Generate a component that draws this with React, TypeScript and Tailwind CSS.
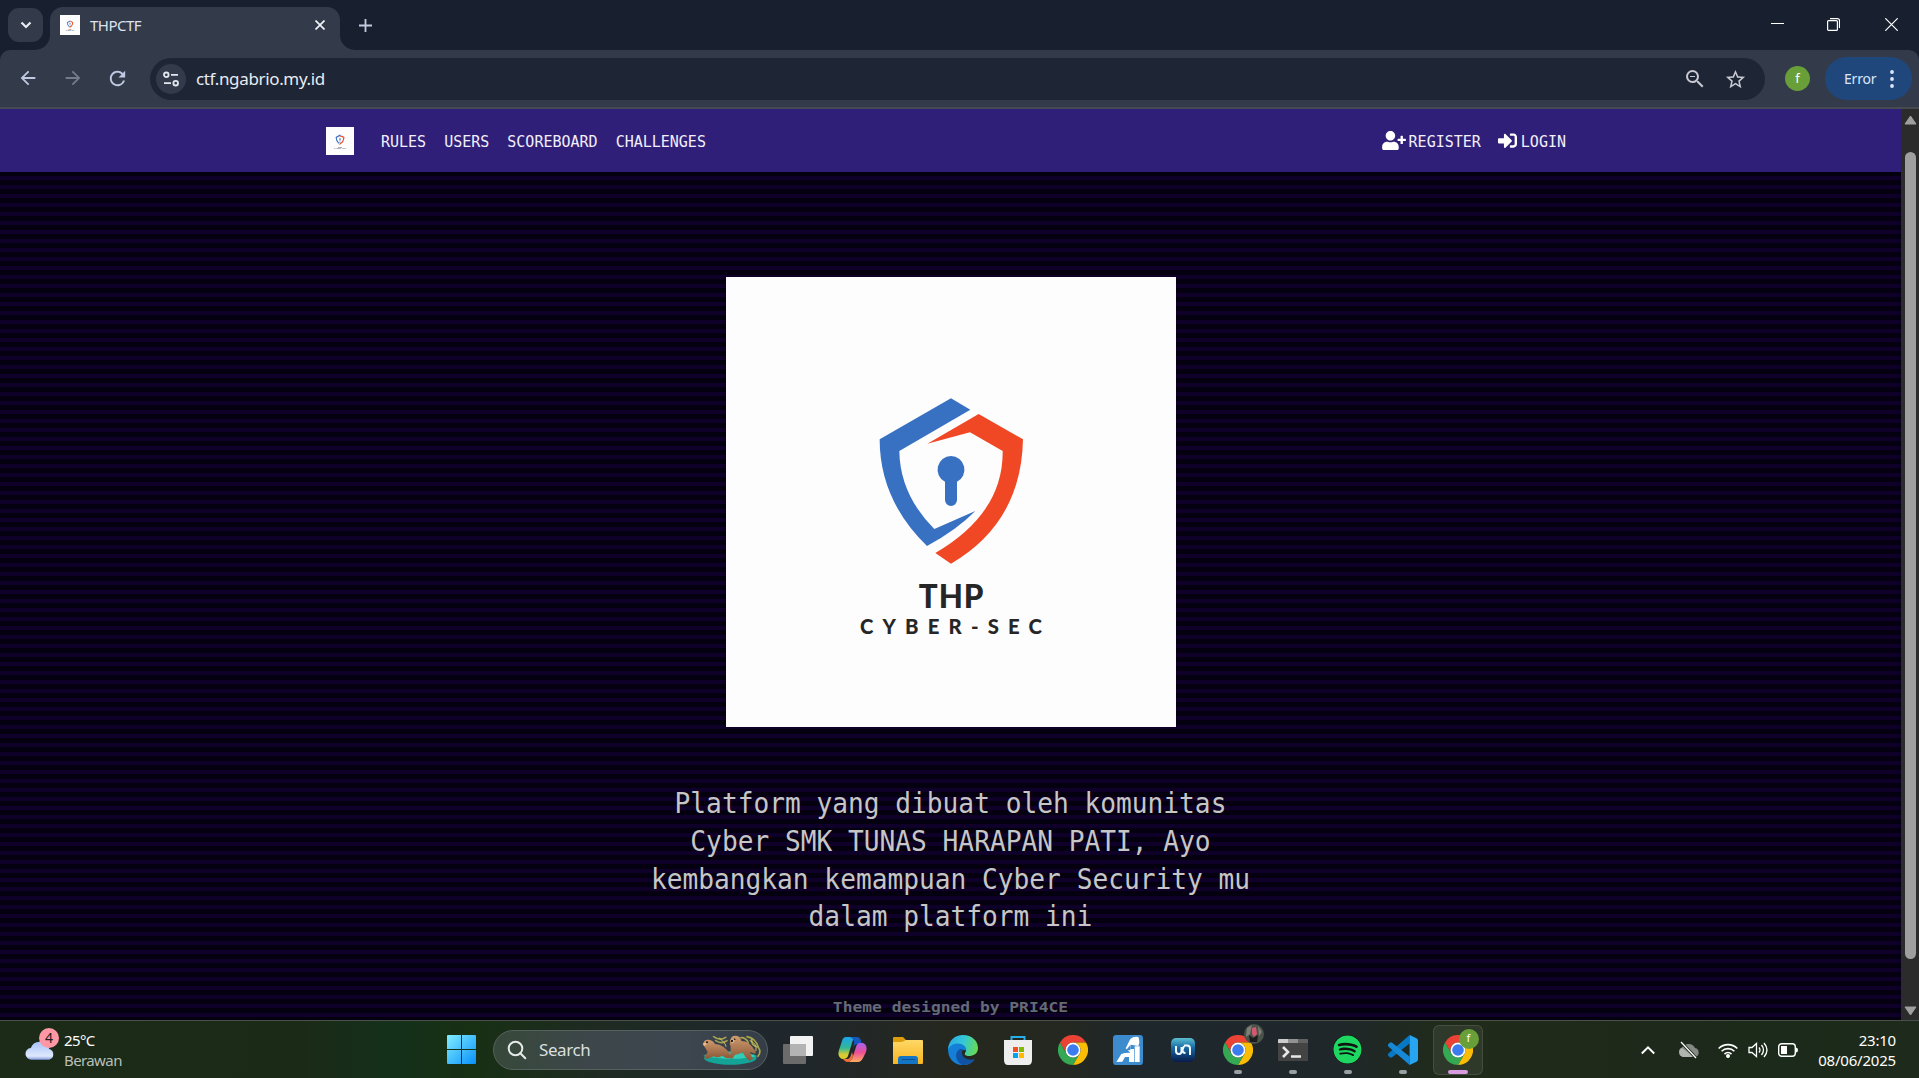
import React from "react";
import { FaUserPlus, FaSignInAlt, FaSpotify } from "react-icons/fa";
import { MdArrowBack, MdArrowForward, MdRefresh, MdZoomOut, MdStarBorder } from "react-icons/md";

const UI = "font-['Noto_Sans','Open_Sans',sans-serif]";
const MONO = "font-['DejaVu_Sans_Mono','Liberation_Mono',monospace]";

function Logo({ className }: { className: string }) {
  return (
    <svg viewBox="0 0 450 450" className={className}>
      <rect width="450" height="450" fill="#fdfdfd" />
      <g transform="translate(114 103) scale(.33333)">
        <path fill="#3871c2" d="M333 55 391 89 178 213Q180 344 283 447L406 393Q350 450 261 498Q119 360 119 178Z" />
        <path fill="#f04825" d="M416 102 549 178Q544 428 333 551L286 519Q490 400 488 213L390 157 262 191Z" />
        <path fill="#3871c2" d="M333 228a41 41 0 0 1 18 77.500V360a18 18 0 0 1-36 0V305.500A41 41 0 0 1 333 228Z" />
        <g fill="#262626" fontFamily="Lato, sans-serif" fontWeight="900">
          <text x="236 296 371" y="683" fontSize="94">THP</text>
          <text x="60" y="762" fontSize="61" textLength="546">CYBER-SEC</text>
        </g>
      </g>
    </svg>
  );
}

function ChromeIcon() {
  return (
    <svg viewBox="0 0 48 48" className="size-[30px]">
      <path fill="#ea4335" d="M3.200 12A24 24 0 0 1 44.800 12H24A12 12 0 0 0 13.600 30Z" />
      <path fill="#fbbc04" d="M44.800 12A24 24 0 0 1 24 48L34.400 30A12 12 0 0 0 24 12Z" />
      <path fill="#34a853" d="M24 48A24 24 0 0 1 3.200 12L13.600 30A12 12 0 0 0 34.400 30Z" />
      <circle cx="24" cy="24" r="12" fill="#fff" />
      <circle cx="24" cy="24" r="9.300" fill="#3b7cf0" />
    </svg>
  );
}

function TabStrip() {
  return (
    <div className="flex h-[50px] items-start bg-[#182030] text-[#dde3ee]">
      <div className="ml-2 mt-2 flex h-[34px] w-[35px] items-center justify-center rounded-[11px] bg-[#333b4b]">
        <svg viewBox="0 0 12 8" className="h-2 w-3" fill="none" stroke="#e8ebf2" strokeWidth="2.200"><path d="M1.500 1.500 6 6l4.500-4.500" /></svg>
      </div>
      <div className="relative ml-[7px] mt-[7px] flex h-[43px] w-[290px] items-start rounded-t-[13px] bg-[#333b4b]">
        <svg viewBox="0 0 15 15" className="absolute -left-[15px] bottom-0 size-[15px]"><path fill="#333b4b" d="M0 15A15 15 0 0 0 15 0V15Z" /></svg>
        <svg viewBox="0 0 15 15" className="absolute -right-[15px] bottom-0 size-[15px]"><path fill="#333b4b" d="M15 15A15 15 0 0 1 0 0V15Z" /></svg>
        <Logo className="ml-[10px] mt-2 size-5" />
        <span className={`${UI} ml-[10px] mt-[8px] text-[15px] leading-5 tracking-[-0.5px]`}>THPCTF</span>
        <svg viewBox="0 0 10 10" className="ml-auto mr-[15px] mt-[13px] size-[10px]" fill="none" stroke="#f0f2f7" strokeWidth="1.700"><path d="M.5.5l9 9M9.500.5l-9 9" /></svg>
      </div>
      <svg viewBox="0 0 13 13" className="ml-[19px] mt-[19px] size-[13px]" fill="none" stroke="#c3cbe0" strokeWidth="1.800"><path d="M6.500 0v13M0 6.500h13" /></svg>
      <div className="ml-auto mr-[21px] mt-[18px] flex">
        <svg viewBox="0 0 13 13" className="mr-[43px] size-[13px]" stroke="#fff"><path d="M0 5.500h13" /></svg>
        <svg viewBox="0 0 13 13" className="mr-[45px] size-[13px]" fill="none" stroke="#fff" strokeWidth="1.200"><rect x=".6" y="2.600" width="9.800" height="9.800" rx="1" /><path d="M3 .6h7.500a2 2 0 0 1 2 2V10" /></svg>
        <svg viewBox="0 0 13 13" className="size-[13px]" fill="none" stroke="#fff" strokeWidth="1.200"><path d="M.3.300l12.400 12.400M12.700.3.300 12.700" /></svg>
      </div>
    </div>
  );
}

function Toolbar() {
  return (
    <div className="h-[59px] bg-[#182030]">
      <div className="flex h-full items-start rounded-t-[10px] border-b-2 border-[#464a52] bg-[#333b4b] pt-2">
        <div className="flex h-[42px] w-[150px] items-center pl-[17px] text-[#c0c9e2]">
          <MdArrowBack className="relative -top-[1px] size-[22px]" />
          <MdArrowForward className="relative -top-[1px] ml-[23px] size-[22px] text-[#747c8c]" />
          <MdRefresh className="relative -top-[1px] ml-[22px] size-[23px]" />
        </div>
        <div className="flex h-[42px] w-[1615px] items-center rounded-full bg-[#1e2636] pl-[6px] pr-[18px]">
          <div className="flex size-[30px] items-center justify-center rounded-full bg-[#333b4b]">
            <svg viewBox="0 0 16 16" className="size-4" fill="none" stroke="#e3e7ef" strokeWidth="1.800"><circle cx="3.300" cy="3.800" r="2.300" /><path d="M8 3.800h7M1 12.200h7" /><circle cx="12.700" cy="12.200" r="2.300" /></svg>
          </div>
          <span className={`${UI} ml-[10px] text-[17px] tracking-[-0.35px] text-[#e8ebf2]`}>ctf.ngabrio.my.id</span>
          <MdZoomOut className="ml-auto size-[24px] text-[#c8c9d2]" />
          <MdStarBorder className="ml-[17px] size-[23px] text-[#c8c9d2]" />
        </div>
        <div className={`${UI} ml-5 mt-2 flex size-[25px] items-center justify-center rounded-full bg-[#689f38] text-[13px] text-white`}>f</div>
        <div className={`${UI} -mt-[1px] ml-[15px] flex h-[43px] w-[87px] items-center rounded-full bg-[#20477b] pl-[19px] text-[14px] tracking-[-0.2px] text-[#dbe6fb]`}>
          Error
          <svg viewBox="0 0 4 18" className="ml-auto mr-[18px] h-[18px] w-1" fill="#dbe6fb"><circle cx="2" cy="2" r="1.900" /><circle cx="2" cy="9" r="1.900" /><circle cx="2" cy="16" r="1.900" /></svg>
        </div>
      </div>
    </div>
  );
}

function Site() {
  return (
    <div className={`${MONO} flex h-[911px] w-[1901px] flex-col items-center overflow-hidden bg-[repeating-linear-gradient(to_bottom,#04000f_0px,#04000f_4px,#0f0029_4px,#0f0029_8px,#04000f_8px,#04000f_9px)] bg-[position:0_63px]`}>
      <nav className="flex h-[63px] w-full shrink-0 items-center bg-[#301f78] pl-[326px] pr-[335px] text-[15px] leading-none text-[#f2effa]">
        <Logo className="size-[28px]" />
        <div className="ml-[27px] flex gap-[18px] pt-[4px]">
          <span>RULES</span><span>USERS</span><span>SCOREBOARD</span><span>CHALLENGES</span>
        </div>
        <div className="ml-auto flex items-center gap-[17px]">
          <span className="flex items-center gap-[3px]"><FaUserPlus className="h-[19px] w-6 text-white" /><span className="pt-[4px]">REGISTER</span></span>
          <span className="flex items-center gap-[4px]"><FaSignInAlt className="size-[19px] text-white" /><span className="pt-[4px]">LOGIN</span></span>
        </div>
      </nav>
      <Logo className="mt-[105px] size-[450px] shrink-0" />
      <div className="mt-[58px] origin-top scale-y-[1.08] text-center text-[26.200px] leading-[34.900px] text-[#c6c6c6]">
        <p>Platform yang dibuat oleh komunitas</p>
        <p>Cyber SMK TUNAS HARAPAN PATI, Ayo</p>
        <p>kembangkan kemampuan Cyber Security mu</p>
        <p>dalam platform ini</p>
      </div>
      <p className="mt-[73px] scale-y-[0.84] text-[16.300px] font-bold leading-5 text-[#646b75]">Theme designed by PRI4CE</p>
    </div>
  );
}

function Scrollbar() {
  return (
    <div className="flex h-[911px] w-[18px] flex-col items-center bg-[#2b2b2b]">
      <svg viewBox="0 0 13 10" className="mt-[6px] h-[10px] w-[13px]"><path d="M6.500 1 12 9H1Z" fill="#9f9f9f" stroke="#9f9f9f" strokeLinejoin="round" /></svg>
      <div className="mt-[27px] h-[807px] w-[11px] rounded-full bg-[#9f9f9f]" />
      <svg viewBox="0 0 13 10" className="mb-[4px] mt-auto h-[10px] w-[13px]"><path d="M6.500 9 12 1H1Z" fill="#9f9f9f" stroke="#9f9f9f" strokeLinejoin="round" /></svg>
    </div>
  );
}

function Seals() {
  return (
    <svg viewBox="0 0 180 90" className="h-[30px] w-[60px]">
      <defs>
        <linearGradient id="fur" x1="0" y1="0" x2="0" y2="1"><stop offset="0" stopColor="#cf9b6f" /><stop offset="1" stopColor="#8a5736" /></linearGradient>
      </defs>
      <g fill="none" stroke="#a6a44c" strokeWidth="5" strokeLinecap="round"><path d="M38 5q18 14 36 2M44 17q18 12 34 0M120 8q16 0 22 16M138 5q26 4 35 34q8 12-2 25M152 12q-2 18 16 24" /><path stroke="#d2bd60" strokeWidth="3" d="M55 9q20 16 20 25M147 17q22 8 18 30" /></g>
      <ellipse cx="88" cy="69" rx="79" ry="20" fill="#14a497" />
      <path d="M6 63q70-22 164 0-70 17-164 0" fill="#31cdb6" />
      <path fill="url(#fur)" d="M7 30q-1-17 16-16 12 1 19 13 27 2 44 29 5 5 0 14-14 0-22-8-14 8-26 2L18 72l-8-4q6-9 10-17-6-11-13-21Z" />
      <path fill="url(#fur)" d="M88 17q1-15 15-15 15 0 18 16 24 0 40 28 6 5 2 10l-16-5q3 12 9 20l-10 6q-15-9-20-26-12 8-24 8l-8 12-9-2q5-14 4-34-5-8-1-18Z" />
      <path fill="#e8bd8c" d="M5 27q8-8 13 0l-8 6M87 16q9-8 15 1l-8 9" />
      <circle cx="18" cy="22" r="3" fill="#201913" /><circle cx="93" cy="18" r="3.500" fill="#201913" /><circle cx="101" cy="13" r="2.500" fill="#201913" />
    </svg>
  );
}

function TaskItem({ children, state }: { children: React.ReactNode; state?: "open" | "active" }) {
  return (
    <div className="flex h-[58px] w-[55px] items-center justify-center">
      <div className={`relative flex h-[50px] w-[50px] items-center justify-center rounded-md ${state === "active" ? "border border-white/10 bg-white/7" : ""}`}>
        {children}
        {state === "open" && <i className="absolute bottom-[1px] h-1 w-2 rounded-full bg-[#9a9fa3]" />}
        {state === "active" && <i className="absolute bottom-0 h-1 w-5 rounded-full bg-[#d99be0]" />}
      </div>
    </div>
  );
}

function Taskbar() {
  return (
    <div className={`${UI} flex h-[58px] items-center border-t border-[#4a514a] bg-[linear-gradient(90deg,#1c2b17_0px,#1b2a17_300px,#14301b_390px,#183014_470px,#1e2a22_600px,#1f272d_780px,#26281f_950px,#252820_1060px,#1e272c_1140px,#1f272b_1330px,#202b1a_1450px,#1e291b_1650px,#1b2a1a_1780px,#1e2a1c_1919px)] text-white`}>
      <div className="relative flex w-[447px] items-center pl-[25px]">
        <svg viewBox="0 0 32 24" className="h-6 w-[31px]">
          <defs><linearGradient id="cloud" x1="0" y1="0" x2="0" y2="1"><stop offset="0" stopColor="#a7c4fa" /><stop offset=".8" stopColor="#dfe8fc" /><stop offset="1" stopColor="#829be0" /></linearGradient></defs>
          <path fill="url(#cloud)" d="M7 22a6 6 0 0 1-1-12A10 10 0 0 1 25 11a5.700 5.700 0 0 1 0 11Z" />
        </svg>
        <span className="absolute left-[39px] top-[-2px] flex size-5 items-center justify-center rounded-full bg-[#ff98a4] text-[14px] text-[#251a1e]">4</span>
        <div className="ml-2 text-[15px] leading-5 tracking-[-0.6px]"><p>25°C</p><p className="text-[#b9bfb8]">Berawan</p></div>
      </div>
      <svg viewBox="0 0 29 29" className="size-[29px]">
        <defs><linearGradient id="win" x1="0" y1="0" x2="1" y2="1"><stop stopColor="#81eeff" /><stop offset="1" stopColor="#0890fa" /></linearGradient></defs>
        <path fill="url(#win)" d="M1 0h13v14H0V1q0-1 1-1ZM15 0h13q1 0 1 1v13H15ZM0 15h14v14H1q-1 0-1-1ZM15 15h14v13q0 1-1 1H15Z" />
      </svg>
      <div className="ml-[17px] flex h-10 w-[275px] items-center rounded-full border border-[#56605d] bg-[linear-gradient(90deg,#37493a,#3d464a_35%,#3d464f_70%,#353e48)] pl-[13px] pr-[6px]">
        <svg viewBox="0 0 20 20" className="size-5" fill="none" stroke="#e5e9e8" strokeWidth="2"><circle cx="8.500" cy="8.500" r="6.800" /><path d="m13.300 13.300 5 5" strokeLinecap="round" /></svg>
        <span className="ml-3 text-[17px] tracking-[-0.4px] text-[#dadfdf]">Search</span>
        <div className="ml-auto"><Seals /></div>
      </div>
      <div className="ml-[2px] flex">
        <TaskItem>
          <svg viewBox="0 0 30 30" className="size-[30px]"><rect y="9" width="23" height="20" rx="1" fill="#6b6b6b" /><rect x="7" y="1" width="23" height="20" rx="1" fill="#f2f2f2" /><path d="M7 9h16v12H7Z" fill="#b3b3b3" /></svg>
        </TaskItem>
        <TaskItem>
          <svg viewBox="0 0 30 30" className="size-[30px]">
            <defs>
              <linearGradient id="cpA" x1="0" y1="0" x2="0" y2="1"><stop stopColor="#19a5ed" /><stop offset=".5" stopColor="#33b893" /><stop offset=".8" stopColor="#d8cb32" /></linearGradient>
              <linearGradient id="cpB" x1="0" y1="0" x2="0" y2="1"><stop stopColor="#a862ef" /><stop offset=".5" stopColor="#ed4f94" /><stop offset="1" stopColor="#ffad62" /></linearGradient>
            </defs>
            <path fill="url(#cpA)" d="M8 2h11q-4 1-5 6l-4 13q-1 3-5 3H4q-5-2-3-9L4 6q1-4 4-4Z" />
            <path fill="#1757c0" d="M12 2h7q3 0 4 4l1 3h-4q-4 0-5 4l1-5q1-4-4-6Z" />
            <path fill="url(#cpB)" d="M22 8h3q5 2 3 9l-3 6q-2 4-5 4H10q4-1 5-6l3-9q1-4 4-4Z" />
            <path fill="#f26d3b" d="M5 24h4q3 0 4-4l1-3 1 4q-1 6-6 6-2 0-4-3Z" />
          </svg>
        </TaskItem>
        <TaskItem>
          <svg viewBox="0 0 30 30" className="size-[30px]"><defs><linearGradient id="fold" x1="0" y1="0" x2="0" y2="1"><stop stopColor="#ffd868" /><stop offset="1" stopColor="#f8b51f" /></linearGradient></defs><path fill="#dd9c0b" d="M1 2h9l3 3h6v5H0V3q0-1 1-1Z" /><path fill="url(#fold)" d="M0 7h9l4-2h16q1 0 1 1v22q0 1-1 1H0Z" /><path fill="#1575c5" d="M5 29v-5q0-3 3-3h14q3 0 3 3v5Z" /><path stroke="#0a4f92" d="M9 24.500h13" /></svg>
        </TaskItem>
        <TaskItem>
          <svg viewBox="0 0 30 30" className="size-[30px]">
            <defs><linearGradient id="edge" x1="0" y1=".3" x2="1" y2=".5"><stop stopColor="#2aa9e8" /><stop offset=".5" stopColor="#34c8d6" /><stop offset="1" stopColor="#67da52" /></linearGradient></defs>
            <path fill="#147fd6" d="M0 14C1 8 6 7 11 8c6 1 9 4 8 8-5-3-8 1-6 6 2 4 7 6 13 3-3 4-8 6-13 5C5 29 0 23 0 14Z" />
            <path fill="#1153a2" d="M12 14c-6 3-5 12 2 16 6 0 10-2 13-6-3 1-7 1-10-1-3-2-4-6-2-9Z" />
            <path fill="url(#edge)" d="M0 14C1 5 7 0 15 0c9 0 15 6 15 13 0 6-5 8-9 8-3 0-5-1-4-3 6-7-10-15-17-4Z" />
          </svg>
        </TaskItem>
        <TaskItem>
          <svg viewBox="0 0 30 30" className="size-[30px]"><path fill="none" stroke="#25aee9" strokeWidth="2" d="M8.500 6V2h13v4" /><path fill="#eee" d="M1 5h28v20q0 5-4 5H5q-4 0-4-5Z" /><path fill="#f25022" d="M10 12h5v5h-5z" /><path fill="#7fba00" d="M16 12h5v5h-5z" /><path fill="#00a4ef" d="M10 18h5v5h-5z" /><path fill="#ffb900" d="M16 18h5v5h-5z" /></svg>
        </TaskItem>
        <TaskItem><ChromeIcon /></TaskItem>
        <TaskItem>
          <svg viewBox="0 0 90 90" className="size-[30px]"><rect width="90" height="90" rx="10" fill="#3c8bce" /><path fill="#fff" d="M52 12Q61 4 76 6q6 14 0 27L53 29l-1 13h11v39H48V66H36L28 80l-18 1 15-24 10-3 17-1-14-13ZM65 34h15v47H65Z" /><path d="m39 46 13-16v16Z" fill="#3c8bce" /></svg>
        </TaskItem>
        <TaskItem>
          <svg viewBox="0 0 24 24" className="size-6"><defs><linearGradient id="ub" x1="0" y1="0" x2="0" y2="1"><stop stopColor="#5bbfd0" /><stop offset=".4" stopColor="#176aa6" /><stop offset="1" stopColor="#071a48" /></linearGradient></defs><rect width="24" height="24" rx="5" fill="url(#ub)" /><path fill="none" stroke="#f1f8fc" strokeWidth="2" d="M5 8v5q0 3 3 3 2.500 0 2.500-3V9M13 8l-1.500 4q0 3 3 3M13 7.500h3q3 0 3 3V17" /></svg>
        </TaskItem>
        <TaskItem state="open">
          <ChromeIcon />
          <svg viewBox="0 0 20 20" className="absolute right-[-1px] top-[-1px] size-5"><circle cx="10" cy="10" r="10" fill="#4b5249" /><path fill="#7c8178" d="M3 4l5-3-2 9-4 3ZM14 2l4 6-3 4Z" /><path fill="#181d1b" d="m5 11 4 3 5-3-1 7H6Z" /><path fill="#d65870" d="m8 4 4-1 1 7-3 3-2-3Z" /></svg>
        </TaskItem>
        <TaskItem state="open">
          <svg viewBox="0 0 30 30" className="size-[30px]"><rect y="4" width="30" height="22" rx="1" fill="#444" /><path fill="#ccc" d="M1 4h9v4H0V5q0-1 1-1Z" /><path fill="#929292" d="M10 4h10v4H10Z" /><path fill="#626262" d="M20 4h9q1 0 1 1v3H20Z" /><path fill="none" stroke="#e8e8e8" strokeWidth="2.600" d="m5 12 5 5-5 5M13 21.500h10" /></svg>
        </TaskItem>
        <TaskItem state="open"><FaSpotify className="size-[29px] rounded-full bg-[#101512] text-[#1ed760]" /></TaskItem>
        <TaskItem state="open">
          <svg viewBox="0 0 100 100" className="size-[30px]"><path fill="#0878c5" d="M72 0v28L14 74q-4 3-8 0l-5-5q-3-4 1-8Z" /><path fill="#1688d6" d="M72 100V72L14 26q-4-3-8 0l-5 5q-3 4 1 8Z" /><path fill="#28a5f1" d="m72 0 23 11q5 2 5 8v62q0 6-5 8l-23 11Z" /></svg>
        </TaskItem>
        <TaskItem state="active">
          <ChromeIcon />
          <span className="absolute right-[3px] top-[3px] flex size-5 items-center justify-center rounded-full bg-[#689f38] text-[11px] text-white">f</span>
        </TaskItem>
      </div>
      <div className="ml-auto mr-[23px] flex items-center">
        <svg viewBox="0 0 14 9" className="size-[14px]" fill="none" stroke="#fff" strokeWidth="2"><path d="m.8 8 6.200-6.200L13.200 8" /></svg>
        <svg viewBox="0 0 22 18" className="ml-[22px] h-[18px] w-[22px]"><path fill="#858b84" d="M6 16a5 5 0 0 1-1-9.500A7.500 7.500 0 0 1 18 7a4.600 4.600 0 0 1 0 9Z" /><path fill="#b0b5af" d="m5 7 12 9H6a4.800 4.800 0 0 1-1-9Z" /><path d="m4 1 15 16" stroke="#1c281a" strokeWidth="3" /><path d="m4 1 15 16" stroke="#fff" strokeWidth="1.300" /></svg>
        <svg viewBox="0 0 20 16" className="ml-[19px] h-4 w-5" fill="none" stroke="#fff" strokeWidth="1.600"><path d="M.7 6.500a13 13 0 0 1 18.600 0M3.600 9.300a9 9 0 0 1 12.800 0M6.500 12.100a5 5 0 0 1 7 0" /><circle cx="10" cy="14" r="1.200" fill="#fff" /></svg>
        <svg viewBox="0 0 20 16" className="ml-[10px] h-4 w-5" fill="none" stroke="#fff" strokeWidth="1.300"><path d="M1 5.500h3L8.500 1.500v13L4 10.500H1ZM11 5.500q2 2.500 0 5M13.500 3q4 5 0 10M16 1q6 7 0 14" /></svg>
        <svg viewBox="0 0 20 14" className="ml-[10px] h-[14px] w-5"><rect x=".7" y=".7" width="16.600" height="12.600" rx="3" fill="none" stroke="#fff" strokeWidth="1.400" /><path fill="#fff" d="M3 3h6v8H3ZM18 4.500q2 0 2 2.500t-2 2.500Z" /></svg>
        <div className="w-[98px] text-right text-[15px] leading-5 tracking-[-0.200px]"><p>23:10</p><p>08/06/2025</p></div>
      </div>
    </div>
  );
}

export default function App() {
  return (
    <div className="flex h-[1078px] w-[1919px] flex-col overflow-hidden bg-[#04000f]">
      <TabStrip />
      <Toolbar />
      <div className="flex h-[911px]"><Site /><Scrollbar /></div>
      <Taskbar />
    </div>
  );
}
